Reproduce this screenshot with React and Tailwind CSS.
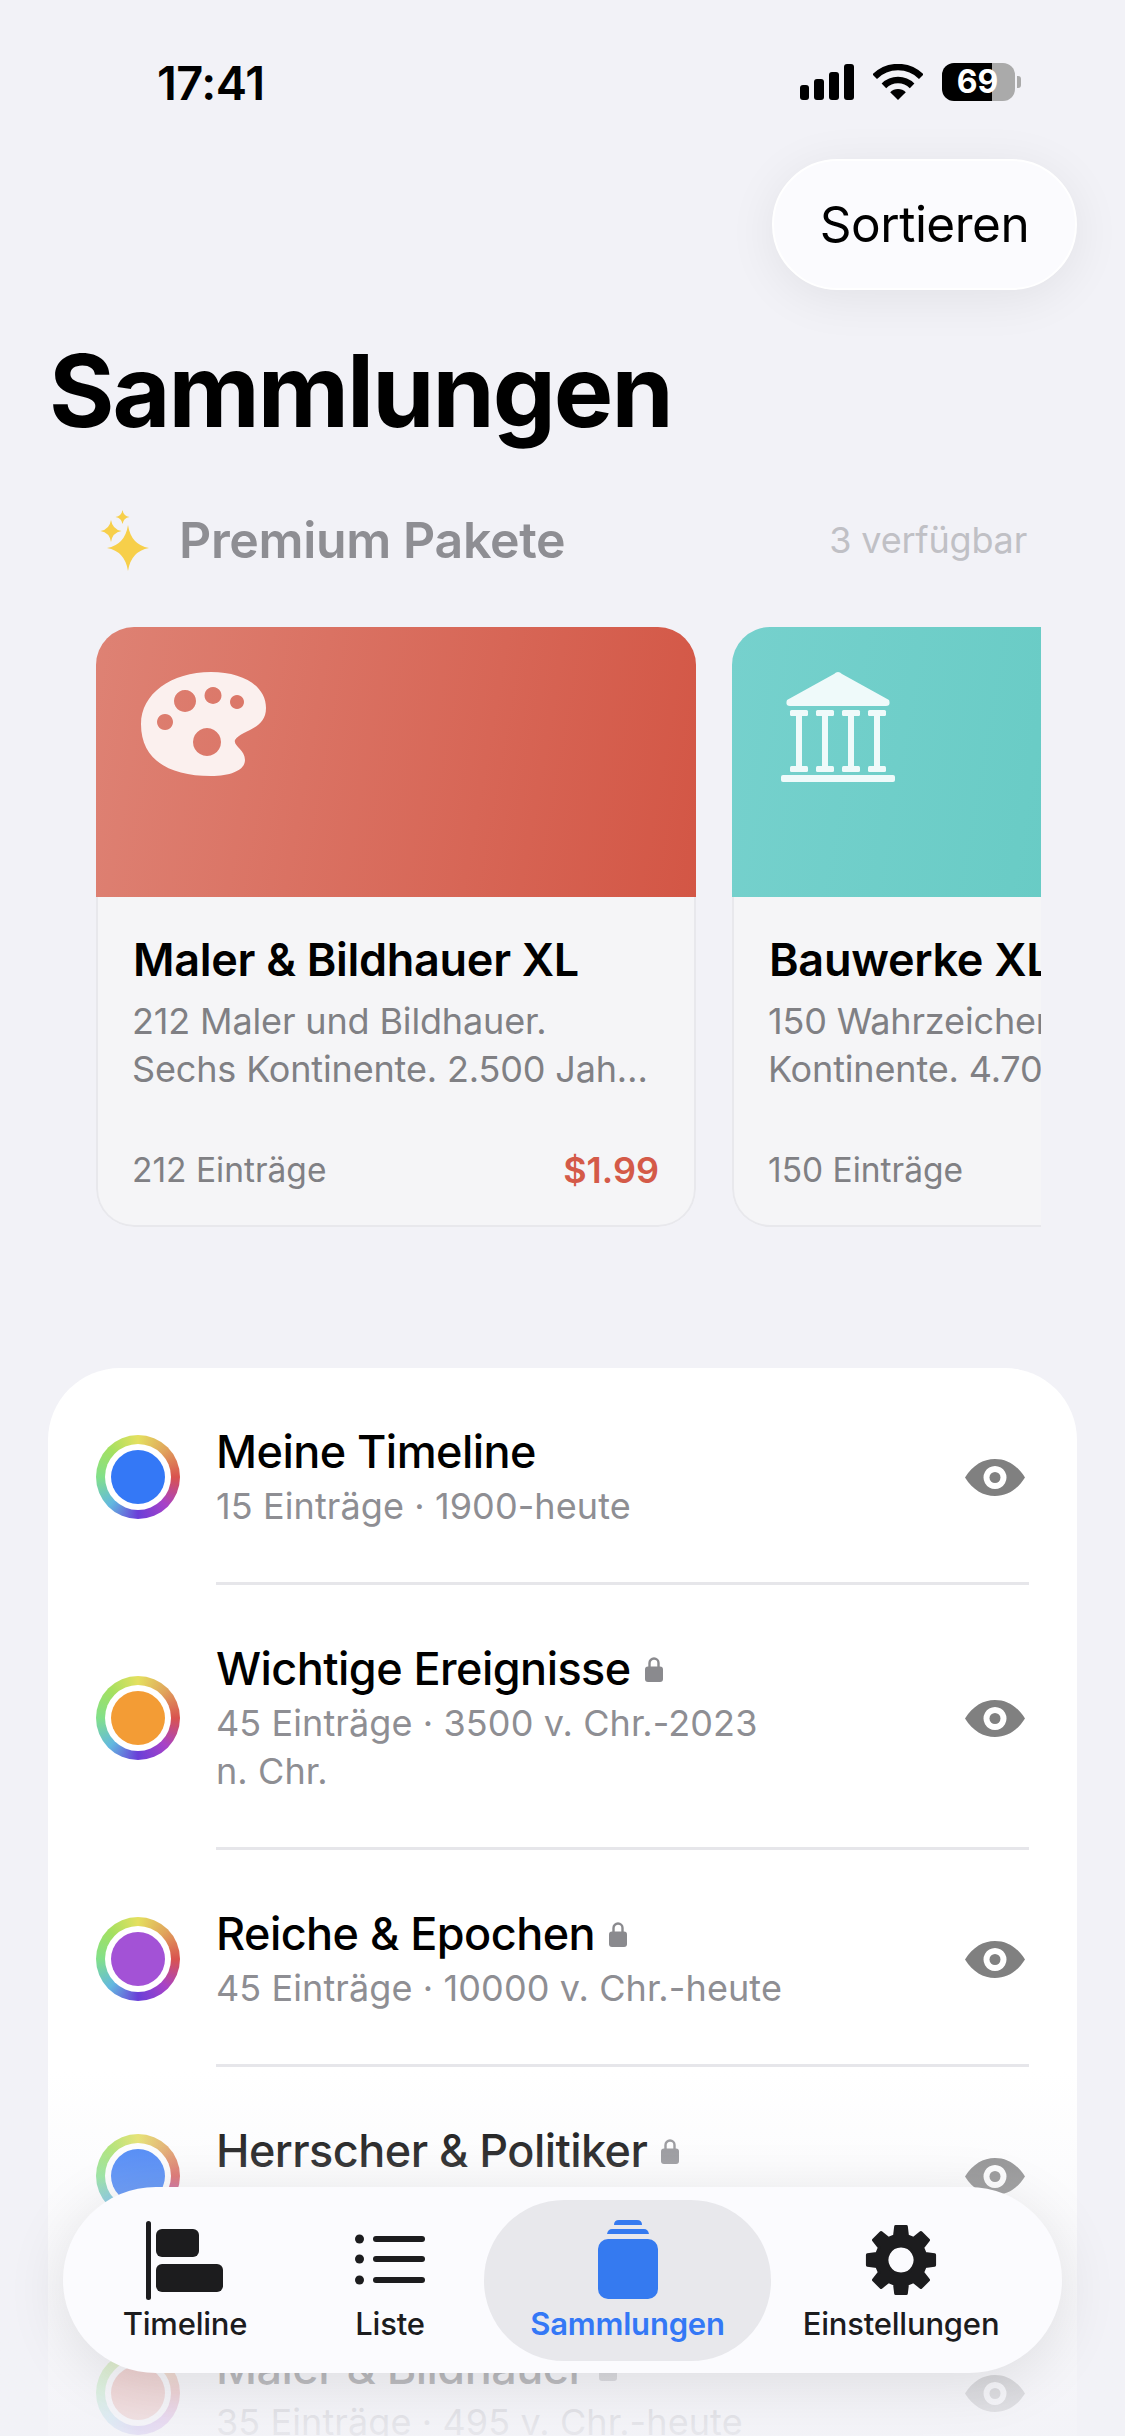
import React from 'react';

const gearPath = (() => {
    const c = 36;
    const pts = [];
    for (let i = 0; i < 8; i++) {
        const a = i * 45 - 90;
        [[-15, 25], [-9, 34], [9, 34], [15, 25]].forEach(([d, r]) => {
            const t = ((a + d) * Math.PI) / 180;
            pts.push(`${(c + r * Math.cos(t)).toFixed(2)} ${(c + r * Math.sin(t)).toFixed(2)}`);
        });
    }
    return `M${pts.join('L')}Z M36 22 a14 14 0 1 0 0.01 0Z`;
})();

const star = (x, y, w, h) => {
    const k = 0.14;
    return `M${x} ${y - h}Q${x + w * k} ${y - h * k} ${x + w} ${y}Q${x + w * k} ${y + h * k} ${x} ${y + h}Q${x - w * k} ${y + h * k} ${x - w} ${y}Q${x - w * k} ${y - h * k} ${x} ${y - h}Z`;
};

const Sparkle = () => (
    <svg width="50" height="62" viewBox="0 0 50 62" className="shrink-0">
        <path d={star(28, 39, 21, 23)} fill="#f7cf4a" />
        <path d={star(11, 22, 10.5, 11)} fill="#f7cf4a" />
        <path d={star(22.5, 8, 7, 7)} fill="#f7cf4a" />
    </svg>
);

const Palette = () => (
    <svg width="125" height="104" viewBox="0 0 125 104">
        <path
            fillRule="evenodd"
            fill="#fbf0ee"
            d="M70 0C102 0 125 14 125 36C125 58 100 58 94 68C92 74 104 78 104 88C104 98 90 104 70 104C28 104 0 88 0 52C0 22 30 0 70 0Z
            M44 18a11 11 0 1 0 .01 0Z M72 15a8.5 8.5 0 1 0 .01 0Z M96 23a7 7 0 1 0 .01 0Z M24 42a8 8 0 1 0 .01 0Z M66 56a14 14 0 1 0 .01 0Z"
        />
    </svg>
);

const Bank = () => (
    <svg width="114" height="110" viewBox="0 0 114 110" fill="#effafa" className="ml-[4px]">
        <path d="M53 2Q57 -2 61 2L108 28Q110 34 105 34H9Q4 34 6 28Z" />
        {[18, 44, 70, 96].map((x) => (
            <g key={x}>
                <rect x={x - 9} y="38" width="18" height="6" rx="1.5" />
                <rect x={x - 3} y="42" width="6" height="54" />
                <rect x={x - 9} y="94" width="18" height="6" rx="1.5" />
            </g>
        ))}
        <rect x="0" y="103" width="114" height="7" rx="2" />
    </svg>
);

const Eye = () => (
    <svg width="60" height="37" viewBox="0 0 60 37" className="shrink-0">
        <path
            fillRule="evenodd"
            fill="#808080"
            d="M0 18.5C8 6 18 0 30 0C42 0 52 6 60 18.5C52 31 42 37 30 37C18 37 8 31 0 18.5Z M30 7a11.5 11.5 0 1 0 .01 0Z"
        />
        <circle cx="30" cy="18.5" r="5.5" fill="#808080" />
    </svg>
);

const Lock = () => (
    <svg width="18" height="26" viewBox="0 0 18 26" className="shrink-0">
        <path d="M4.5 12V7a4.5 4.5 0 0 1 9 0v5" fill="none" stroke="#8a8a8e" strokeWidth="2.4" />
        <rect x="0" y="10.5" width="18" height="15.5" rx="3" fill="#8a8a8e" />
    </svg>
);

const TimelineIcon = () => (
    <svg width="78" height="80" viewBox="0 0 78 80" fill="#1c1c1e">
        <rect x="0" y="1" width="5" height="79" rx="2.5" />
        <rect x="10" y="9" width="43" height="28" rx="6" />
        <rect x="10" y="44" width="67" height="28" rx="6" />
    </svg>
);

const ListIcon = () => (
    <svg width="70" height="80" viewBox="0 0 70 80" fill="#1c1c1e">
        {[19, 39, 60].map((y) => (
            <g key={y}>
                <circle cx="4.5" cy={y} r="4.5" />
                <rect x="18" y={y - 3} width="52" height="6" rx="3" />
            </g>
        ))}
    </svg>
);

const StackIcon = () => (
    <svg width="60" height="80" viewBox="0 0 60 80" fill="#357af0">
        <path d="M16 5Q16 0 21 0H39Q44 0 44 5Z" />
        <path d="M9 14Q10 9 14 9H46Q50 9 51 14Z" />
        <rect x="0" y="19" width="60" height="60" rx="10" />
    </svg>
);

const GearIcon = () => (
    <svg width="72" height="80" viewBox="0 -4 72 80">
        <path d={gearPath} fill="#1c1c1e" fillRule="evenodd" stroke="#1c1c1e" strokeWidth="3" strokeLinejoin="round" />
    </svg>
);

const Wifi = () => (
    <svg width="50" height="36" viewBox="0 0 50 36" className="shrink-0">
        <path d="M1.7 12.7A33 33 0 0 1 48.3 12.7" fill="none" stroke="#000" strokeWidth="6.5" />
        <path d="M10.9 21.9A20 20 0 0 1 39.1 21.9" fill="none" stroke="#000" strokeWidth="6.5" />
        <path d="M25 36L17.2 28.2A11 11 0 0 1 32.8 28.2Z" fill="#000" />
    </svg>
);

const StatusBar = () => (
    <div className="flex h-[159px] items-start justify-between pl-[157px] pr-[104px] pt-[60px]">
        <span className="text-[47px] font-semibold leading-[46px] tracking-[-0.5px] text-black">17:41</span>
        <div className="flex items-center pt-[3px]">
            <div className="flex items-end gap-[5px]">
                <div className="h-[15px] w-[9px] rounded-[3px] bg-black" />
                <div className="h-[21px] w-[10px] rounded-[3px] bg-black" />
                <div className="h-[28px] w-[10px] rounded-[3px] bg-black" />
                <div className="h-[36px] w-[10px] rounded-[3px] bg-black" />
            </div>
            <div className="ml-[19px]">
                <Wifi />
            </div>
            <div className="ml-[19px] flex h-[38px] w-[73px] items-center justify-center rounded-[12px] bg-[linear-gradient(90deg,#000_68%,#aaa_68%)] pr-[2px] text-[32px] font-bold leading-none text-white">
                69
            </div>
            <div className="ml-[2px] h-[12px] w-[4px] rounded-r-[3px] bg-[#aaa]" />
        </div>
    </div>
);

const PackCard = ({ gradient, icon, title, lines, count, price }) => (
    <div className="w-[600px] shrink-0 overflow-hidden rounded-[38px]">
        <div className={`h-[270px] pl-[45px] pt-[45px] ${gradient}`}>{icon}</div>
        <div className="flex h-[330px] flex-col rounded-b-[38px] border-x-2 border-b-2 border-[#e8e8ec] bg-[#f5f5f7] pl-[35px] pr-[35px] pt-[36px] pb-[31px]">
            <div className="whitespace-nowrap text-[45px] font-semibold leading-[54px] tracking-[-0.3px] text-black">{title}</div>
            <div className="mt-[10px] -ml-px whitespace-nowrap text-[36px] leading-[48px] tracking-[-0.15px] text-[#808084]">
                {lines.map((line) => (
                    <div key={line}>{line}</div>
                ))}
            </div>
            <div className="mt-auto -ml-px flex h-[48px] items-center justify-between text-[33.5px]">
                <span className="text-[#808084]">{count}</span>
                {price && <span className="text-[36px] font-semibold text-[#d45a48]">{price}</span>}
            </div>
        </div>
    </div>
);

const Row = ({ color, title, locked, lines }) => (
    <div className="flex pl-[48px] pr-[48px]">
        <div className="mr-[36px] flex shrink-0 items-center">
            <div className="flex h-[84px] w-[84px] items-center justify-center rounded-full bg-[conic-gradient(#e4e05f,#e0a45c,#d9534f,#a742c8,#6a3fd8,#62b8e0,#82e08a,#a4e060,#e4e05f)]">
                <div className="flex h-[66px] w-[66px] items-center justify-center rounded-full bg-white">
                    <div className={`h-[54px] w-[54px] rounded-full ${color}`} />
                </div>
            </div>
        </div>
        <div className="flex flex-1 items-center justify-between border-b-[3px] border-[#e6e6ea] pb-[52px] pt-[56px] pr-[4px]">
            <div>
                <div className="flex items-center gap-[14px] text-[45px] font-medium leading-[56px] tracking-[-0.55px] text-black">
                    {title}
                    {locked && <Lock />}
                </div>
                <div className="mt-[2px] text-[36px] leading-[48px] tracking-[0.1px] text-[#8e8e93]">
                    {lines.map((line) => (
                        <div key={line}>{line}</div>
                    ))}
                </div>
            </div>
            <Eye />
        </div>
    </div>
);

const Tab = ({ label, icon, className, labelClass = 'font-medium text-[#1c1c1e]' }) => (
    <div className={`flex h-[161px] flex-col items-center pt-[20px] ${className}`}>
        {icon}
        <span className={`mt-[5px] text-[31px] leading-[38px] tracking-[-0.2px] ${labelClass}`}>{label}</span>
    </div>
);

const App = () => {
    return (
        <div className="relative h-[2436px] w-[1125px] overflow-hidden bg-[#f2f2f7] font-['Inter',sans-serif]">
            <StatusBar />

            <div className="flex justify-end pr-[48px]">
                <div className="flex h-[131px] w-[305px] items-center justify-center rounded-[66px] border-2 border-white bg-[#fbfbfe] text-[49.5px] leading-none tracking-[-0.5px] text-black shadow-[0_8px_50px_rgba(0,0,0,0.07)]">
                    Sortieren
                </div>
            </div>

            <h1 className="ml-[49px] mt-[41px] text-[100px] font-bold leading-[120px] tracking-[-2px] text-black">Sammlungen</h1>

            <div className="mt-[59px] flex h-[60px] items-center justify-between pl-[100px] pr-[98px]">
                <div className="flex items-center gap-[29px]">
                    <Sparkle />
                    <span className="text-[50px] font-semibold leading-none tracking-[-0.35px] text-[#8e8e93]">Premium Pakete</span>
                </div>
                <span className="text-[36px] leading-none tracking-[-0.2px] text-[#c0c0c5]">3 verfügbar</span>
            </div>

            <div className="ml-[96px] mt-[57px] flex w-[945px] gap-[36px] overflow-hidden">
                <PackCard
                    gradient="bg-[linear-gradient(100deg,#de8274,#d35645)]"
                    icon={<Palette />}
                    title="Maler & Bildhauer XL"
                    lines={['212 Maler und Bildhauer.', 'Sechs Kontinente. 2.500 Jah…']}
                    count="212 Einträge"
                    price="$1.99"
                />
                <PackCard
                    gradient="bg-[linear-gradient(100deg,#76d1cd,#5ec7bf)]"
                    icon={<Bank />}
                    title="Bauwerke XL"
                    lines={['150 Wahrzeichen', 'Kontinente. 4.700 Jahre']}
                    count="150 Einträge"
                />
            </div>

            <div className="mx-[48px] mt-[141px] rounded-t-[72px] bg-white">
                <Row color="bg-[#3478f6]" title="Meine Timeline" lines={['15 Einträge · 1900-heute']} />
                <Row color="bg-[#f39c35]" title="Wichtige Ereignisse" locked lines={['45 Einträge · 3500 v. Chr.-2023', 'n. Chr.']} />
                <Row color="bg-[#a352d6]" title="Reiche & Epochen" locked lines={['45 Einträge · 10000 v. Chr.-heute']} />
                <Row color="bg-[#3478f6]" title="Herrscher & Politiker" locked lines={['\u00a0']} />
                <Row color="bg-[#e0705f]" title="Maler & Bildhauer" locked lines={['35 Einträge · 495 v. Chr.-heute']} />
            </div>

            {/* fade under the tab bar */}
            <div className="absolute inset-x-0 bottom-0 h-[365px] bg-linear-to-b from-[#f2f2f7]/0 via-[#f2f2f7]/65 via-70% to-[#f2f2f7]/90" />

            <div className="absolute bottom-[63px] left-[63px] flex h-[186px] w-[999px] items-center rounded-[93px] bg-[#fbfbfe] pl-[30px] shadow-[0_10px_60px_rgba(0,0,0,0.10)]">
                <Tab className="w-[184px]" label="Timeline" icon={<TimelineIcon />} />
                <Tab className="ml-[19px] w-[188px]" label="Liste" icon={<ListIcon />} />
                <Tab
                    className="w-[287px] rounded-[80px] bg-[#e8e8ec]"
                    label="Sammlungen"
                    labelClass="font-semibold text-[#3478f6]"
                    icon={<StackIcon />}
                />
                <Tab className="w-[260px]" label="Einstellungen" icon={<GearIcon />} />
            </div>
        </div>
    );
};

export default App;
